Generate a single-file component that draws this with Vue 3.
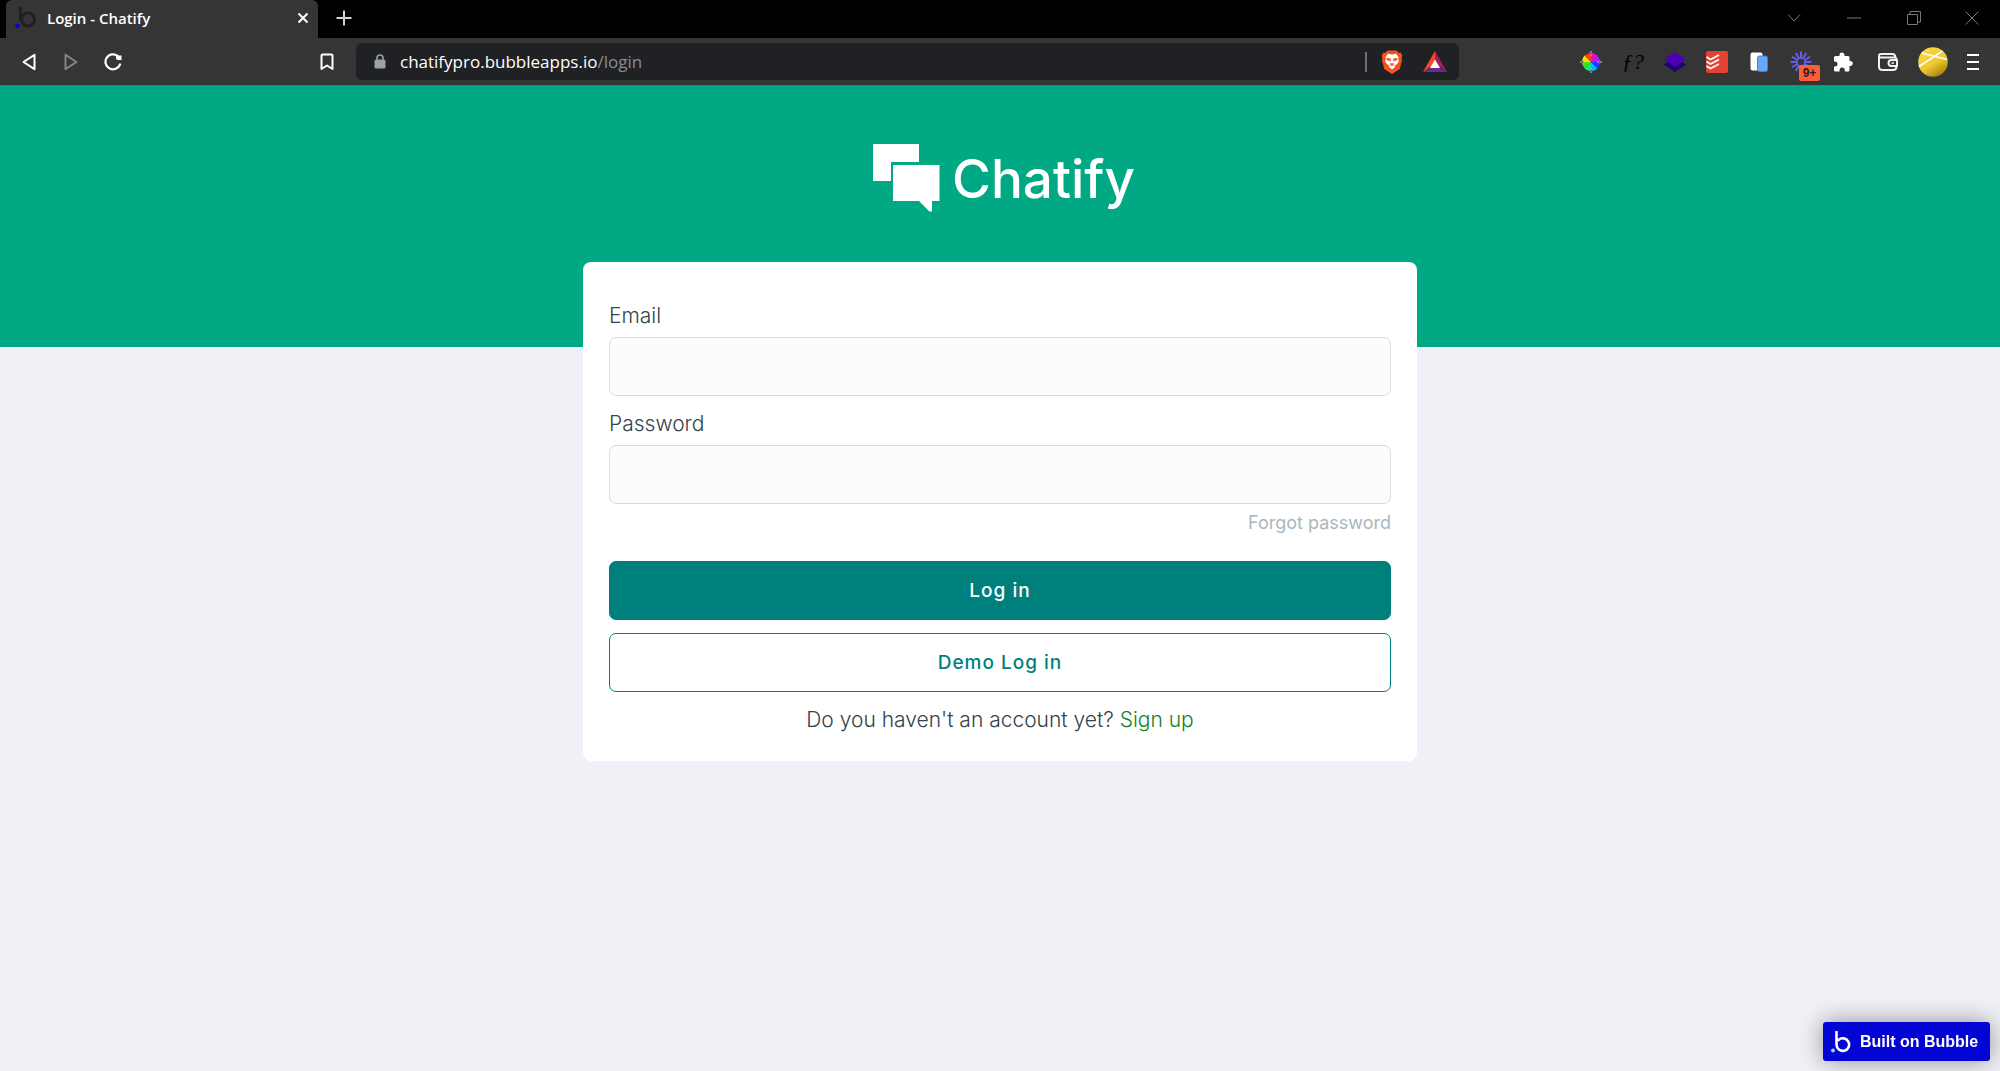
<script setup>
import { ref } from 'vue'

const email = ref('')
const password = ref('')

const rays = Array.from({ length: 12 }, (_, i) => i * 30)
</script>

<template>
  <div class="browser">
    <header class="chrome">
      <div class="tab-strip">
        <div class="tab">
          <svg class="favicon" width="22" height="22" viewBox="0 0 22 22">
            <path d="M5.5 0v13" stroke="#202020" stroke-width="3" fill="none" />
            <circle cx="13" cy="12.500" r="6.500" stroke="#202020" stroke-width="3" fill="none" />
            <circle cx="2.500" cy="19" r="2.300" fill="#0205d3" />
          </svg>
          <span class="tab-title">Login - Chatify</span>
          <button class="icon-btn" aria-label="Close tab">
            <svg width="12" height="12" viewBox="0 0 12 12">
              <path d="M1.500 1.500l9 9M10.500 1.500l-9 9" stroke="#fff" stroke-width="2" />
            </svg>
          </button>
        </div>
        <button class="icon-btn new-tab" aria-label="New tab">
          <svg width="16" height="16" viewBox="0 0 16 16">
            <path d="M8 0.500v15M0.500 8h15" stroke="#d0d0d0" stroke-width="2" />
          </svg>
        </button>
        <div class="window-controls">
          <button class="icon-btn" aria-label="Search tabs">
            <svg width="14" height="8" viewBox="0 0 14 8"><path d="M1 0.500l6 6.500 6-6.500" /></svg>
          </button>
          <button class="icon-btn" aria-label="Minimize">
            <svg width="14" height="2" viewBox="0 0 14 2"><path d="M0 1h14" /></svg>
          </button>
          <button class="icon-btn" aria-label="Restore">
            <svg width="14" height="14" viewBox="0 0 14 14"><path d="M0.500 3.500h10v10h-10zM3 3.500v-3h10.500v10.500h-3" /></svg>
          </button>
          <button class="icon-btn" aria-label="Close window">
            <svg width="14" height="14" viewBox="0 0 14 14"><path d="M0.500 0.500l13 13M13.500 0.500l-13 13" /></svg>
          </button>
        </div>
      </div>

      <div class="toolbar">
        <div class="nav">
          <button class="icon-btn" aria-label="Back">
            <svg width="14" height="18" viewBox="0 0 14 18">
              <path d="M12.500 1.800v14.400L1.500 9z" stroke="#fff" stroke-width="2" stroke-linejoin="round" fill="none" />
            </svg>
          </button>
          <button class="icon-btn" aria-label="Forward">
            <svg width="14" height="18" viewBox="0 0 14 18">
              <path d="M1.500 1.800v14.400L12.500 9z" stroke="#858585" stroke-width="2" stroke-linejoin="round" fill="none" />
            </svg>
          </button>
          <button class="icon-btn" aria-label="Reload">
            <svg width="18" height="18" viewBox="0 0 18 18">
              <path d="M13.500 2.800A7.500 7.500 0 1 0 16 11.500" stroke="#fff" stroke-width="2.200" fill="none" stroke-linecap="round" />
              <path d="M12 2.500h5.500v4.500h-3.500q-2 0-2-2z" fill="#fff" />
            </svg>
          </button>
          <button class="icon-btn bookmark" aria-label="Bookmark">
            <svg width="14" height="18" viewBox="0 0 14 18">
              <path d="M1.500 2.500q0-1 1-1h9q1 0 1 1v13.500L7 12.500l-5.500 3.500z" stroke="#fff" stroke-width="2" stroke-linejoin="round" fill="none" />
            </svg>
          </button>
        </div>

        <div class="omnibox">
          <svg width="12" height="15" viewBox="0 0 12 15">
            <path d="M3 6V4a3 3 0 0 1 6 0v2" stroke="#9aa0a6" stroke-width="1.600" fill="none" />
            <rect x="0.500" y="5.500" width="11" height="9" rx="1.500" fill="#9aa0a6" />
          </svg>
          <span class="url">chatifypro.bubbleapps.io<span class="path">/login</span></span>
          <span class="divider"></span>
          <button class="icon-btn" aria-label="Brave Shields">
            <svg width="22" height="24" viewBox="0 0 22 24">
              <path d="M6.500 0.500h9l2 2.300 2-0.300 1.800 3-0.700 2.500 0.500 2-2.300 9-7.800 5-7.800-5-2.300-9 0.500-2L0.700 5.500l1.800-3 2 0.300z" fill="#f4511e" />
              <path d="M11 4.500l4-0.700 2.800 3.700-0.800 1.500 1 2-2 3.300-1.500 0.500-0.500 2.200L11 19.500 8 17l-0.500-2.200-1.500-0.500L4 11l1-2-0.800-1.500L7 3.800z" fill="#fff" />
              <path d="M5.800 8.200l3.500 0.600v2.200L6.300 10zM16.200 8.200l-3.500 0.600v2.200l3-1zM9 13.500l2 1 2-1M8.300 15.500l2.700-1.200 2.700 1.200" fill="#f4511e" stroke="#f4511e" stroke-width="0.700" />
            </svg>
          </button>
          <button class="icon-btn" aria-label="Brave Rewards">
            <svg width="24" height="21" viewBox="0 0 24 21">
              <path d="M12 0L0 21l12-8.500z" fill="#ff4724" />
              <path d="M12 0l12 21-12-8.500z" fill="#9e1f63" />
              <path d="M0 21h24l-12-7z" fill="#662d91" />
              <path d="M12 8.500l5 8.500H7z" fill="#fff" />
            </svg>
          </button>
        </div>

        <div class="extensions">
          <button class="icon-btn" aria-label="Color picker">
            <svg width="22" height="22" viewBox="0 0 22 22">
              <path d="M11 11V2a9 9 0 0 1 6.400 2.600z" fill="#ff00c8" />
              <path d="M11 11l6.400-6.400A9 9 0 0 1 20 11z" fill="#b01cff" />
              <path d="M11 11h9a9 9 0 0 1-2.600 6.400z" fill="#2b35ff" />
              <path d="M11 11l6.400 6.400A9 9 0 0 1 11 20z" fill="#00b4ff" />
              <path d="M11 11v9a9 9 0 0 1-6.400-2.600z" fill="#00f08c" />
              <path d="M11 11l-6.400 6.400A9 9 0 0 1 2 11z" fill="#3ee80e" />
              <path d="M11 11H2a9 9 0 0 1 2.600-6.400z" fill="#f5e400" />
              <path d="M11 11L4.600 4.600A9 9 0 0 1 11 2z" fill="#ff3b1f" />
              <path d="M11 0l1 2.500L11 5l-1-2.500zM11 17l1 2.500-1 2.500-1-2.500zM0 11l2.500-1L5 11l-2.500 1zM17 11l2.500-1 2.500 1-2.500 1z" fill="#333" stroke="#ddd" stroke-width="0.500" />
            </svg>
          </button>
          <button class="icon-btn font-ext" aria-label="Font finder">ƒ?</button>
          <button class="icon-btn" aria-label="Layers">
            <svg width="22" height="20" viewBox="0 0 22 20">
              <path d="M11 5l11 7.500L11 20 0 12.500z" fill="#210073" />
              <path d="M11 0l11 7.500L11 15 0 7.500z" fill="#4b00b5" />
            </svg>
          </button>
          <button class="icon-btn" aria-label="Todoist">
            <svg width="22" height="22" viewBox="0 0 22 22">
              <rect width="22" height="22" rx="2" fill="#e44332" />
              <path d="M0.500 6l4 2.500L13 4M0.500 10.500l4 2.500L13 8.500M0.500 15l4 2.500L13 13" stroke="#fff" stroke-width="1.600" fill="none" />
            </svg>
          </button>
          <button class="icon-btn" aria-label="Clipboard">
            <svg width="18" height="20" viewBox="0 0 18 20">
              <rect x="0.500" y="0.500" width="12" height="18" rx="2" fill="#fff" />
              <rect x="7.500" y="4" width="10" height="15.500" rx="2" fill="#67a8f7" stroke="#3f7fd8" />
            </svg>
          </button>
          <button class="icon-btn notify" aria-label="Loom, 9+ notifications">
            <svg width="22" height="22" viewBox="0 0 22 22">
              <path v-for="a in rays" :key="a" d="M11 0.500v6.500" :transform="`rotate(${a} 11 11)`" stroke="#625df5" stroke-width="2" />
              <circle cx="11" cy="11" r="4" stroke="#625df5" stroke-width="1.500" fill="none" />
            </svg>
            <span class="count">9+</span>
          </button>
          <button class="icon-btn" aria-label="Extensions">
            <svg width="20" height="20" viewBox="0 0 20 20">
              <path d="M1 5.500q0-1.500 1.500-1.500H6.500V3a2.500 2.500 0 0 1 5 0v1H15q1.500 0 1.500 1.500V9h0.800a2.500 2.500 0 0 1 0 5h-0.800v4q0 1.500-1.500 1.500h-3.200V18a2.600 2.600 0 0 0-5.200 0v1.500H2.500Q1 19.500 1 18v-3.500h1a2.500 2.500 0 0 0 0-5H1z" fill="#fff" />
            </svg>
          </button>
          <button class="icon-btn wallet" aria-label="Wallet">
            <svg width="20" height="18" viewBox="0 0 20 18" fill="none" stroke="#f2f2f2" stroke-width="2">
              <path d="M1 3v10.500Q1 17 4.500 17h10.500q3 0 3.500-3M1 3q0-2 2-2h11.500q2.500 0 3 3M1.500 4.500h14.500q2.500 0 2.500 2" />
              <path d="M19 7h-5.500a3 3 0 0 0 0 6H19z" />
              <path d="M13.500 10H16" stroke-width="1.500" />
            </svg>
          </button>
          <button class="icon-btn" aria-label="Profile">
            <svg width="30" height="30" viewBox="0 0 30 30">
              <defs>
                <linearGradient id="avatar" x1="0.200" y1="0" x2="0.800" y2="1">
                  <stop offset="0" stop-color="#f9d84a" />
                  <stop offset="0.550" stop-color="#efc930" />
                  <stop offset="1" stop-color="#9c7a08" />
                </linearGradient>
              </defs>
              <circle cx="15" cy="15" r="14.800" fill="url(#avatar)" />
              <path d="M1 19.500L24.500 4M3.500 6L29 12.500" stroke="#fff" stroke-width="1.600" />
            </svg>
          </button>
          <button class="icon-btn menu" aria-label="Menu">
            <svg width="12" height="18" viewBox="0 0 12 18">
              <path d="M0 2h12M0 9h12M0 16h12" stroke="#fff" stroke-width="2" />
            </svg>
          </button>
        </div>
      </div>
    </header>

    <main class="page">
      <div class="hero">
        <svg width="67" height="68" viewBox="0 0 67 68">
          <path d="M0 0h46v18H18v19H0z" fill="#fff" />
          <path d="M20 21h46.500v36H59v10.500h-2.500L46 57H20z" fill="#fff" />
        </svg>
        <span class="brand">Chatify</span>
      </div>

      <form class="card" @submit.prevent>
        <label for="email">Email</label>
        <input id="email" v-model="email" type="email">
        <label for="password">Password</label>
        <input id="password" v-model="password" type="password">
        <a class="forgot" href="#">Forgot password</a>
        <button class="btn primary" type="submit">Log in</button>
        <button class="btn outline" type="button">Demo Log in</button>
        <p class="signup">Do you haven't an account yet? <a href="#">Sign up</a></p>
      </form>
    </main>

    <a class="built-on" href="#">
      <svg width="20" height="22" viewBox="0 0 20 22">
        <path d="M5.500 1v12.500a6.300 6.300 0 1 0 2-4.500" stroke="#fff" stroke-width="2.600" fill="none" stroke-linecap="round" />
        <circle cx="2" cy="19.500" r="2" fill="#8fd3f5" />
      </svg>
      <span>Built on Bubble</span>
    </a>
  </div>
</template>

<style>
body {
  margin: 0;
  background: #eff1f6;
}
</style>

<style scoped>
.browser {
  min-height: 100vh;
  font-family: Inter, "Liberation Sans", sans-serif;
  color: #33424c;
}
.icon-btn {
  display: flex;
  align-items: center;
  justify-content: center;
  padding: 0;
  border: 0;
  background: none;
}
.chrome {
  font-family: "Open Sans", "Noto Sans", sans-serif;
  color: #fff;
}

/* tab strip */
.tab-strip {
  display: flex;
  height: 38px;
  padding-left: 6px;
  background: #000;
}
.tab-strip .icon-btn {
  height: 36px;
}
.tab {
  box-sizing: border-box;
  display: flex;
  align-items: center;
  gap: 10px;
  width: 312px;
  padding: 0 9px 2px;
  border-radius: 6px 6px 0 0;
  background: #353535;
}
.tab-title {
  flex: 1;
  font-size: 15px;
  font-weight: 600;
  line-height: 20px;
}
.new-tab {
  width: 52px;
}
.window-controls {
  display: flex;
  margin-left: auto;
}
.window-controls .icon-btn {
  width: 60px;
}
.window-controls .icon-btn:last-child {
  width: 56px;
}
.window-controls path {
  fill: none;
  stroke: #777;
}

/* toolbar */
.toolbar {
  display: flex;
  align-items: center;
  height: 47px;
  border-bottom: 1px solid #6a6a6a;
  background: #353535;
}
.nav {
  display: flex;
  width: 348px;
  padding-left: 8px;
}
.nav .icon-btn {
  width: 42px;
}
.nav .bookmark {
  margin-left: auto;
  margin-right: 8px;
}
.omnibox {
  box-sizing: border-box;
  display: flex;
  flex: 1;
  align-items: center;
  gap: 14px;
  height: 37px;
  padding: 0 12px 0 18px;
  border-radius: 6px;
  background: #202124;
}
.url {
  flex: 1;
  font-size: 17px;
  line-height: 24px;
}
.path {
  color: #8a8d91;
}
.divider {
  width: 2px;
  height: 20px;
  background: #6b6e72;
}
.omnibox .icon-btn:last-child {
  margin-left: 6px;
}
.extensions {
  display: flex;
  margin-left: 111px;
  padding-right: 8px;
}
.extensions .icon-btn {
  width: 42px;
  height: 30px;
}
.extensions .wallet {
  width: 48px;
}
.extensions .menu {
  width: 38px;
}
.extensions .font-ext {
  color: #000;
  font: italic 22px "Liberation Serif", serif;
}
.notify {
  position: relative;
}
.count {
  position: absolute;
  right: 2px;
  bottom: -4px;
  width: 21px;
  border-radius: 2px;
  background: #ff5c39;
  color: #222;
  font-size: 12px;
  font-weight: 700;
  line-height: 16px;
}

/* login page */
.page {
  display: flex;
  flex-direction: column;
  align-items: center;
}
.hero {
  box-sizing: border-box;
  display: flex;
  align-items: flex-start;
  justify-content: center;
  gap: 12px;
  width: 100%;
  height: 261px;
  padding: 58px 0 0 8px;
  background: #00a884;
}
.brand {
  color: #fff;
  font-size: 53px;
  font-weight: 500;
  line-height: 70px;
}
.card {
  box-sizing: border-box;
  display: flex;
  flex-direction: column;
  width: 100%;
  max-width: 834px;
  margin-top: -85px;
  padding: 40px 26px 26px;
  border-radius: 8px;
  background: #fff;
}
.card label {
  margin-bottom: 8px;
  font-size: 21px;
  font-weight: 300;
  line-height: 27px;
}
.card input {
  box-sizing: border-box;
  height: 59px;
  margin-bottom: 14px;
  padding: 0 16px;
  border: 1px solid #dcdcdc;
  border-radius: 7px;
  background: #fcfcfc;
  font: inherit;
  font-size: 21px;
}
.card #password {
  margin-bottom: 6px;
}
.forgot {
  align-self: flex-end;
  margin-bottom: 25px;
  color: #a9b6c0;
  font-size: 18px;
  line-height: 26px;
  text-decoration: none;
}
.btn {
  height: 59px;
  margin-bottom: 13px;
  border: 1px solid #008080;
  border-radius: 7px;
  font-family: inherit;
  font-size: 19px;
  font-weight: 500;
  letter-spacing: 1px;
}
.primary {
  background: #00807c;
  color: #fff;
}
.outline {
  background: #fff;
  color: #00807c;
}
.signup {
  margin: 0;
  font-size: 21px;
  font-weight: 300;
  line-height: 30px;
  text-align: center;
}
.signup a {
  color: #15831f;
  text-decoration: none;
}

/* floating badge */
.built-on {
  position: fixed;
  right: 10px;
  bottom: 10px;
  box-sizing: border-box;
  display: flex;
  align-items: center;
  gap: 9px;
  width: 167px;
  height: 39px;
  padding-left: 8px;
  border-radius: 3px;
  background: #0205d3;
  box-shadow: 0 0 24px rgba(0, 0, 0, 0.4);
  color: #fff;
  font-family: "Liberation Sans", sans-serif;
  font-size: 16px;
  font-weight: 700;
  text-decoration: none;
}
</style>
